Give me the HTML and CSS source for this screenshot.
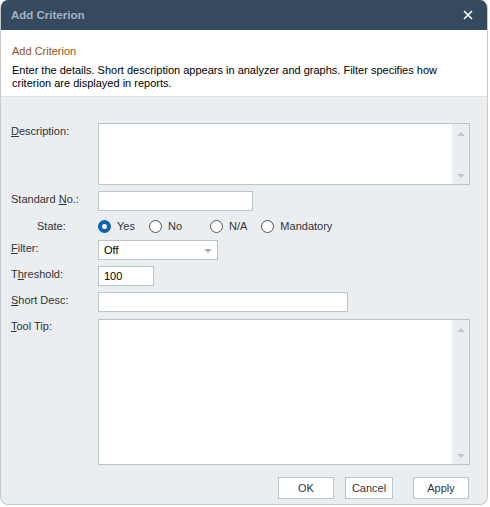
FILE: index.html
```html
<!DOCTYPE html>
<html lang="en">
<head>
    <meta charset="UTF-8">
    <title>Add Criterion</title>
<link rel="stylesheet" href="styles.css">
</head>
<body>
    <div class="dialog">
        <div class="titlebar">
            <span class="title">Add Criterion</span>
            <svg class="close" width="10" height="10" viewBox="0 0 10 10">
                <path d="M1 1 L9 9 M9 1 L1 9" stroke="#fff" stroke-width="1.6"/>
            </svg>
        </div>
        <div class="header">
            <div class="header-title">Add Criterion</div>
            <div class="header-text">Enter the details. Short description appears in analyzer and graphs. Filter specifies how criterion are displayed in reports.</div>
        </div>
        <div class="form">
            <div class="row">
                <label class="label"><u>D</u>escription:</label>
                <div class="memo desc-memo">
                    <div class="memo-text"></div>
                    <div class="scroll">
                        <span class="arrow-up"></span>
                        <span class="arrow-down"></span>
                    </div>
                </div>
            </div>
            <div class="row">
                <label class="label">Standard <u>N</u>o.:</label>
                <div class="input std-input"></div>
            </div>
            <div class="row state-row">
                <label class="label state-label">State:</label>
                <div class="radios">
                    <span class="radio-item yes"><span class="radio checked"></span>Yes</span>
                    <span class="radio-item no"><span class="radio"></span>No</span>
                    <span class="radio-item na"><span class="radio"></span>N/A</span>
                    <span class="radio-item"><span class="radio"></span>Mandatory</span>
                </div>
            </div>
            <div class="row">
                <label class="label"><u>F</u>ilter:</label>
                <div class="input select">
                    <span>Off</span>
                    <span class="arrow-down"></span>
                </div>
            </div>
            <div class="row">
                <label class="label">T<u>h</u>reshold:</label>
                <div class="input threshold">100</div>
            </div>
            <div class="row">
                <label class="label"><u>S</u>hort Desc:</label>
                <div class="input short-input"></div>
            </div>
            <div class="row">
                <label class="label tip-label"><u>T</u>ool Tip:</label>
                <div class="memo tip-memo">
                    <div class="memo-text"></div>
                    <div class="scroll">
                        <span class="arrow-up"></span>
                        <span class="arrow-down"></span>
                    </div>
                </div>
            </div>
            <div class="buttons">
                <button class="btn">OK</button>
                <button class="btn cancel">Cancel</button>
                <button class="btn">Apply</button>
            </div>
        </div>
    </div>
</body>
</html>
```

FILE: styles.css
```css
* {
    box-sizing: border-box;
}

body {
    margin: 0;
    background-color: #fff;
    font-family: "Liberation Sans", Arial, sans-serif;
    font-size: 11px;
    color: #000;
}

.dialog {
    width: 488px;
    height: 505px;
    border: 1px solid #c3c9cc;
    border-top: none;
    border-radius: 8px;
    overflow: hidden;
    background-color: #eaeef0;
    display: flex;
    flex-direction: column;
}

.titlebar {
    height: 30px;
    background-color: #354a5f;
    display: flex;
    align-items: center;
    justify-content: space-between;
    padding: 0 14px 0 10px;
}

.title {
    color: #a4b2c0;
    font-weight: bold;
    font-size: 11.5px;
}

.close {
    display: block;
}

.header {
    background-color: #fff;
    height: 67px;
    padding: 15px 11px 0;
    border-bottom: 1px solid #dde2e5;
}

.header-title {
    color: #96511a;
    margin-bottom: 7px;
}

.header-text {
    line-height: 13px;
    max-width: 440px;
}

.form {
    flex: 1;
    padding: 26px 17px 0 10px;
    display: flex;
    flex-direction: column;
}

.row {
    display: flex;
    margin-bottom: 6px;
}

.label {
    width: 87px;
    flex-shrink: 0;
    padding-top: 2px;
    color: #333;
}

.state-label {
    padding-left: 26px;
    padding-top: 0;
}

.input {
    height: 20px;
    background-color: #fff;
    border: 1px solid #bac6ca;
    padding: 3px 5px;
}

.std-input { width: 155px; }
.threshold { width: 56px; }
.short-input { width: 250px; }

.select {
    width: 120px;
    display: flex;
    align-items: center;
    justify-content: space-between;
    padding: 0 5px 0 5px;
}

.select .arrow-down {
    margin-top: 1px;
}

.memo {
    flex: 1;
    display: flex;
    background-color: #fff;
    border: 1px solid #bac6ca;
}

.desc-memo { height: 62px; }
.tip-memo { height: 146px; margin-top: 1px; }

.memo-text {
    flex: 1;
}

.scroll {
    width: 17px;
    background-color: #eaeef0;
    display: flex;
    flex-direction: column;
    justify-content: space-between;
    align-items: center;
    padding: 8px 0 6px;
}

.arrow-up {
    width: 0;
    height: 0;
    border-left: 4px solid transparent;
    border-right: 4px solid transparent;
    border-bottom: 4px solid #c4c8cb;
}

.arrow-down {
    width: 0;
    height: 0;
    border-left: 4px solid transparent;
    border-right: 4px solid transparent;
    border-top: 4px solid #a9aeb2;
}

.scroll .arrow-down {
    border-top-color: #c4c8cb;
}

.state-row {
    height: 16px;
    align-items: center;
    margin-bottom: 6px;
    margin-top: 1px;
}

.radios {
    display: flex;
    align-items: center;
}

.radio-item {
    display: flex;
    align-items: center;
    color: #333;
}

.radio-item.yes { margin-right: 14px; }
.radio-item.no { margin-right: 28px; }
.radio-item.na { margin-right: 14px; }

.radio {
    width: 13px;
    height: 13px;
    border: 1px solid #555;
    border-radius: 50%;
    margin-right: 6px;
    background-color: #fff;
}

.radio.checked {
    border: 4px solid #0e63b5;
}

.buttons {
    display: flex;
    justify-content: flex-end;
    margin-top: 6px;
    padding-right: 1px;
}

.btn {
    font-family: inherit;
    font-size: 11px;
    color: #333;
    background-color: #fff;
    border: 1px solid #bac6ca;
    width: 56px;
    height: 22px;
    padding: 0;
}

.btn.cancel {
    width: 48px;
    margin: 0 20px 0 11px;
}
```
